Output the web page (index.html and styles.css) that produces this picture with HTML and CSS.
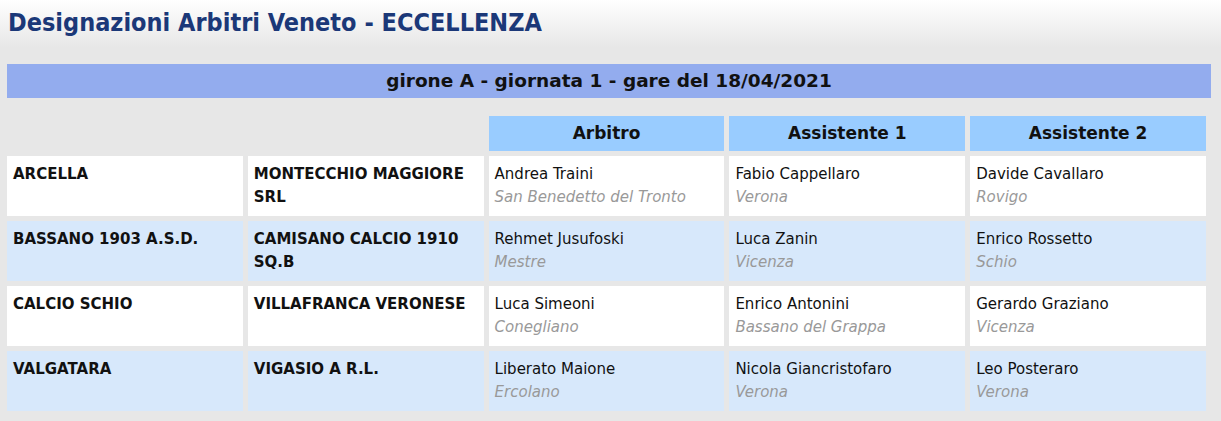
FILE: index.html
```html
<!DOCTYPE html>
<html lang="it">
<head>
<meta charset="utf-8">
<title>Designazioni Arbitri Veneto - ECCELLENZA</title>
<link rel="stylesheet" href="styles.css">
</head>
<body>
<div class="page">
  <h1 class="title">Designazioni Arbitri Veneto - ECCELLENZA</h1>
  <div class="girone">girone A - giornata 1 - gare del 18/04/2021</div>
  <div class="grid">
    <div class="blank"></div>
    <div class="blank"></div>
    <div class="head">Arbitro</div>
    <div class="head">Assistente 1</div>
    <div class="head">Assistente 2</div>

    <div class="cell team">ARCELLA</div>
    <div class="cell team">MONTECCHIO MAGGIORE SRL</div>
    <div class="cell"><span class="name">Andrea Traini</span><span class="city">San Benedetto del Tronto</span></div>
    <div class="cell"><span class="name">Fabio Cappellaro</span><span class="city">Verona</span></div>
    <div class="cell"><span class="name">Davide Cavallaro</span><span class="city">Rovigo</span></div>

    <div class="cell alt team">BASSANO 1903 A.S.D.</div>
    <div class="cell alt team">CAMISANO CALCIO 1910 SQ.B</div>
    <div class="cell alt"><span class="name">Rehmet Jusufoski</span><span class="city">Mestre</span></div>
    <div class="cell alt"><span class="name">Luca Zanin</span><span class="city">Vicenza</span></div>
    <div class="cell alt"><span class="name">Enrico Rossetto</span><span class="city">Schio</span></div>

    <div class="cell team">CALCIO SCHIO</div>
    <div class="cell team">VILLAFRANCA VERONESE</div>
    <div class="cell"><span class="name">Luca Simeoni</span><span class="city">Conegliano</span></div>
    <div class="cell"><span class="name">Enrico Antonini</span><span class="city">Bassano del Grappa</span></div>
    <div class="cell"><span class="name">Gerardo Graziano</span><span class="city">Vicenza</span></div>

    <div class="cell alt team">VALGATARA</div>
    <div class="cell alt team">VIGASIO A R.L.</div>
    <div class="cell alt"><span class="name">Liberato Maione</span><span class="city">Ercolano</span></div>
    <div class="cell alt"><span class="name">Nicola Giancristofaro</span><span class="city">Verona</span></div>
    <div class="cell alt"><span class="name">Leo Posteraro</span><span class="city">Verona</span></div>
  </div>
</div>
</body>
</html>
```

FILE: styles.css
```css
html, body {
  margin: 0;
  padding: 0;
}
body {
  background: linear-gradient(to bottom, #ffffff 0px, #e7e7e7 48px, #e7e7e7 100%);
  background-color: #e7e7e7;
  min-height: 421px;
  font-family: "DejaVu Sans", Verdana, sans-serif;
  color: #111;
}
.page {
  padding: 0 10px 0 7px;
}
.title {
  margin: 0;
  padding: 7px 0 0 1px;
  height: 56px;
  box-sizing: border-box;
  font-family: "DejaVu Sans Condensed", "DejaVu Sans", sans-serif;
  font-weight: bold;
  font-size: 25px;
  line-height: 32px;
  color: #1b3878;
}
.girone {
  margin-top: 8px;
  height: 34px;
  background: #93acee;
  text-align: center;
  font-family: "DejaVu Sans", sans-serif;
  font-weight: bold;
  font-size: 18.5px;
  line-height: 34px;
  color: #111;
}
.grid {
  margin-top: 18px;
  width: 1199px;
  display: grid;
  grid-template-columns: repeat(5, 1fr);
  grid-template-rows: 35px repeat(4, 60px);
  column-gap: 5px;
  row-gap: 5px;
}
.head {
  background: #99ccff;
  text-align: center;
  font-weight: bold;
  font-size: 17px;
  line-height: 35px;
}
.cell {
  background: #ffffff;
  padding: 7px 6px 0 6px;
  font-size: 15px;
  line-height: 23px;
  display: flex;
  flex-direction: column;
  align-items: flex-start;
}
.cell.alt {
  background: #d7e8fb;
}
.team {
  display: block;
  font-weight: bold;
}
.name {
  color: #111;
}
.city {
  color: #999999;
  font-style: italic;
}
```
